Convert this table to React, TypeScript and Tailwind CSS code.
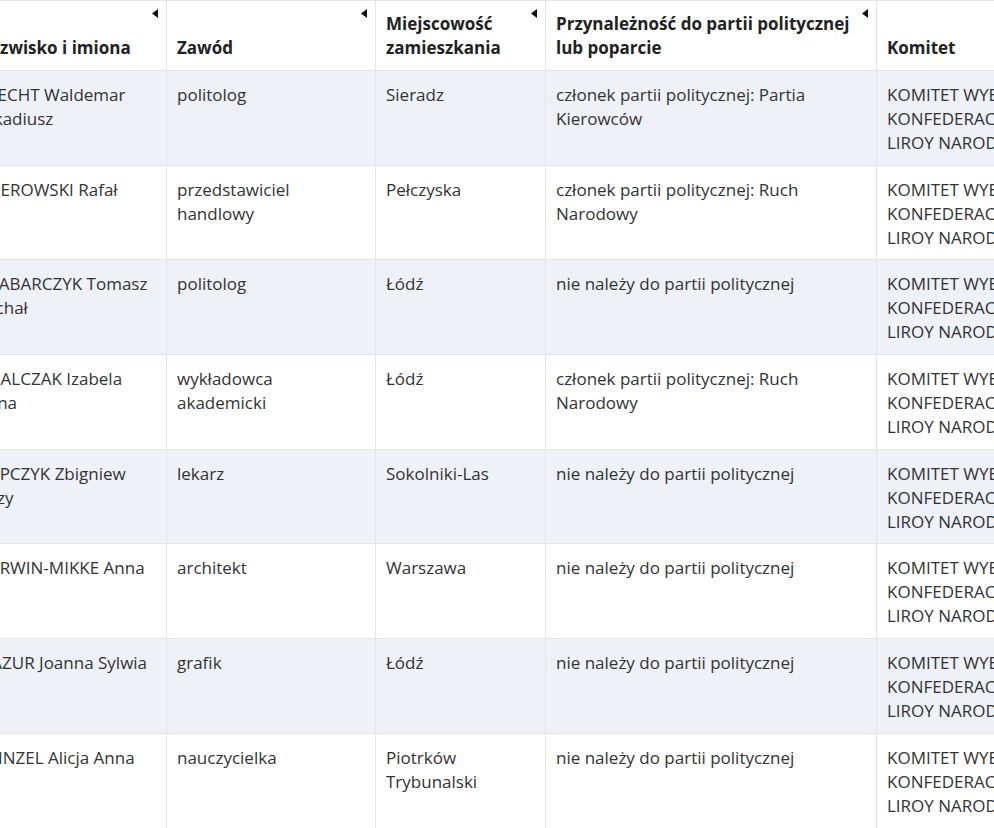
const rows = [
  {
    name: 'BRECHT Waldemar Arkadiusz',
    job: 'politolog',
    city: 'Sieradz',
    party: 'członek partii politycznej: Partia Kierowców',
  },
  {
    name: 'SKIEROWSKI Rafał',
    job: 'przedstawiciel handlowy',
    city: 'Pełczyska',
    party: 'członek partii politycznej: Ruch Narodowy',
  },
  {
    name: 'GRABARCZYK Tomasz Michał',
    job: 'politolog',
    city: 'Łódź',
    party: 'nie należy do partii politycznej',
  },
  {
    name: 'SMALCZAK Izabela Anna',
    job: 'wykładowca akademicki',
    city: 'Łódź',
    party: 'członek partii politycznej: Ruch Narodowy',
  },
  {
    name: 'KOPCZYK Zbigniew Jerzy',
    job: 'lekarz',
    city: 'Sokolniki-Las',
    party: 'nie należy do partii politycznej',
  },
  {
    name: 'KORWIN-MIKKE Anna',
    job: 'architekt',
    city: 'Warszawa',
    party: 'nie należy do partii politycznej',
  },
  {
    name: 'MAZUR Joanna Sylwia',
    job: 'grafik',
    city: 'Łódź',
    party: 'nie należy do partii politycznej',
  },
  {
    name: 'HEINZEL Alicja Anna',
    job: 'nauczycielka',
    city: 'Piotrków Trybunalski',
    party: 'nie należy do partii politycznej',
  },
];

const committee = 'KOMITET WYBORCZY KONFEDERACJA KORWIN BRAUN LIROY NARODOWCY';

function SortArrow() {
  return (
    <svg
      className="absolute right-[8px] top-[8px] w-[6px] h-[9px]"
      viewBox="0 0 6 9"
      aria-hidden="true"
    >
      <polygon points="6,0 6,9 0,4.5" fill="#111" />
    </svg>
  );
}

function Th({ children }: { children: React.ReactNode }) {
  return (
    <th className="relative align-bottom text-left font-bold text-[#222] border-x border-b border-[#e4e4e4] pl-[10px] pr-[20px] pt-[11px] pb-[10px]">
      {children}
      <SortArrow />
    </th>
  );
}

function Td({ children }: { children: React.ReactNode }) {
  return (
    <td className="align-top border border-[#e4e4e4] px-[10px] pt-[12px] pb-[9.7px]">
      {children}
    </td>
  );
}

export default function App() {
  return (
    <div
      className="w-[994px] h-[828px] overflow-hidden bg-white text-[17px] leading-[24px] text-[#333]"
      style={{ fontFamily: '"Open Sans", "Noto Sans", sans-serif' }}
    >
      <table className="table-fixed border-collapse ml-[-35px] w-[1208px] border-t border-[#e4e4e4]">
        <colgroup>
          <col className="w-[201px]" />
          <col className="w-[209px]" />
          <col className="w-[170px]" />
          <col className="w-[331px]" />
          <col className="w-[297px]" />
        </colgroup>
        <thead>
          <tr className="bg-white">
            <Th>Nazwisko i imiona</Th>
            <Th>Zawód</Th>
            <Th>Miejscowość zamieszkania</Th>
            <Th>Przynależność do partii politycznej lub poparcie</Th>
            <Th>Komitet</Th>
          </tr>
        </thead>
        <tbody>
          {rows.map((r, i) => (
            <tr key={i} className={i % 2 === 0 ? 'bg-[#eef1f8]' : 'bg-white'}>
              <Td>{r.name}</Td>
              <Td>{r.job}</Td>
              <Td>{r.city}</Td>
              <Td>{r.party}</Td>
              <Td>{committee}</Td>
            </tr>
          ))}
        </tbody>
      </table>
    </div>
  );
}
